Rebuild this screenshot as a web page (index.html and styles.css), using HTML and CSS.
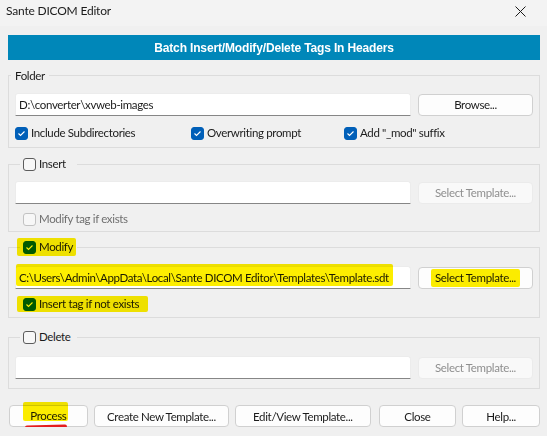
FILE: index.html
```html
<!DOCTYPE html>
<html lang="en">
<head>
    <meta charset="UTF-8">
    <title>Sante DICOM Editor</title>
    <link rel="stylesheet" href="styles.css">
</head>
<body>
    <div class="titlebar">
        <span class="title">Sante DICOM Editor</span>
        <svg class="close-icon" width="11" height="11" viewBox="0 0 11 11">
            <path d="M0.5 0.5 L10.5 10.5 M10.5 0.5 L0.5 10.5" stroke="#1a1a1a" stroke-width="1" fill="none"/>
        </svg>
    </div>

    <div class="dialog">
        <div class="banner">Batch Insert/Modify/Delete Tags In Headers</div>

        <!-- Folder -->
        <div class="group group-folder">
            <div class="group-title">Folder</div>
            <div class="field-row">
                <div class="textbox">D:\converter\xvweb-images</div>
                <button class="btn">Browse...</button>
            </div>
            <div class="check-row check-row-folder">
                <label class="check"><span class="box checked"></span>Include Subdirectories</label>
                <label class="check"><span class="box checked"></span>Overwriting prompt</label>
                <label class="check"><span class="box checked"></span>Add "_mod" suffix</label>
            </div>
        </div>

        <!-- Insert -->
        <div class="group group-insert">
            <label class="group-title check-title"><span class="box"></span>Insert</label>
            <div class="field-row">
                <div class="textbox"></div>
                <button class="btn" disabled>Select Template...</button>
            </div>
            <div class="check-row">
                <label class="check disabled"><span class="box"></span>Modify tag if exists</label>
            </div>
        </div>

        <!-- Modify -->
        <div class="group group-modify">
            <label class="group-title check-title"><span class="hl hl-title"><span class="box checked"></span>Modify</span></label>
            <div class="field-row">
                <div class="textbox"><span class="hl hl-path">C:\Users\Admin\AppData\Local\Sante DICOM Editor\Templates\Template.sdt</span></div>
                <button class="btn"><span class="hl hl-btn">Select Template...</span></button>
            </div>
            <div class="check-row">
                <label class="check hl hl-row"><span class="box checked"></span>Insert tag if not exists</label>
            </div>
        </div>

        <!-- Delete -->
        <div class="group group-delete">
            <label class="group-title check-title"><span class="box"></span>Delete</label>
            <div class="field-row">
                <div class="textbox"></div>
                <button class="btn" disabled>Select Template...</button>
            </div>
        </div>

        <div class="actions">
            <button class="btn btn-process"><span class="hl hl-process">Process</span></button>
            <button class="btn btn-wide">Create New Template...</button>
            <button class="btn btn-wide">Edit/View Template...</button>
            <button class="btn btn-close">Close</button>
            <button class="btn btn-help">Help...</button>
        </div>
    </div>
</body>
</html>
```

FILE: styles.css
```css
body {
    margin: 0;
    background-color: #f0f0f0;
    font-family: Lato, "Noto Sans", sans-serif;
    font-size: 11.5px;
    letter-spacing: -0.35px;
    color: #1b1b1b;
}
.titlebar {
    height: 26px;
    background-color: #f3f3f3;
    display: flex;
    justify-content: space-between;
    align-items: flex-start;
    padding: 3px 21px 0 6px;
    box-sizing: border-box;
}
.title {
    line-height: 16px;
    font-size: 12px;
    letter-spacing: -0.2px;
}
.close-icon {
    margin-top: 3px;
}
.dialog {
    padding: 9px 7px 0 8px;
}
.banner {
    height: 25px;
    background-color: #0087b9;
    color: white;
    font-family: "Liberation Sans", Arial, sans-serif;
    font-weight: bold;
    font-size: 12px;
    letter-spacing: -0.15px;
    display: flex;
    align-items: center;
    justify-content: center;
}
.group {
    position: relative;
    border: 1px solid #dcdcdc;
    padding: 16px 6px 4px;
}
.group-folder {
    margin-top: 15px;
    padding: 17px 6px 6px;
}
.group-insert {
    margin-top: 16px;
}
.group-modify {
    margin-top: 15px;
    padding: 18px 6px 5px;
}
.group-delete {
    margin-top: 19px;
    padding: 18px 6px 9px;
}
.group-title {
    position: absolute;
    top: -8px;
    left: 2px;
    padding: 0 4px;
    line-height: 16px;
    background-color: #f0f0f0;
}
.check-title {
    top: -9px;
    left: 11px;
    width: 57px;
    box-sizing: border-box;
    padding: 0 0 0 3px;
    display: flex;
    align-items: center;
    gap: 3px;
}
.field-row {
    display: flex;
    align-items: center;
    gap: 7px;
}
.textbox {
    flex: 1;
    height: 23px;
    box-sizing: border-box;
    background: white;
    border: 1px solid #ececec;
    border-bottom-color: #868686;
    border-radius: 3px 3px 0 0;
    padding: 0 3px;
    line-height: 21px;
    white-space: nowrap;
}
.btn {
    width: 115px;
    height: 22px;
    background-color: #fdfdfd;
    border: 1px solid #d0d0d0;
    border-radius: 4px;
    font-family: inherit;
    font-size: 11.5px;
    letter-spacing: -0.35px;
    color: #1b1b1b;
    padding: 0;
    overflow: visible;
    white-space: nowrap;
}
.btn:disabled {
    background-color: #f9f9f9;
    border-color: #ebebeb;
    color: #8f8f8f;
}
.check-row {
    display: flex;
    margin-top: 7px;
    padding-left: 8px;
    height: 16px;
}
.check-row-folder {
    display: grid;
    grid-template-columns: 176px 153px auto;
    padding-left: 0;
    margin-top: 9px;
}
.check {
    display: inline-flex;
    align-items: center;
    gap: 3px;
    line-height: 16px;
}
.check.disabled {
    color: #6f6f6f;
}
.box {
    width: 13px;
    height: 13px;
    box-sizing: border-box;
    border: 1px solid #5c5c5c;
    border-radius: 3px;
    background: #f7f7f7;
    display: inline-block;
    flex-shrink: 0;
}
.disabled .box {
    border-color: #c2c2c2;
}
.box.checked {
    border-color: #005fb8;
    background: #005fb8 url("data:image/svg+xml;utf8,<svg xmlns='http://www.w3.org/2000/svg' width='13' height='13'><path d='M3.5 6.5 L5.5 8.5 L9.5 4.5' stroke='white' stroke-width='1.1' fill='none'/></svg>") no-repeat;
    background-position: -1px -1px;
}
.actions {
    display: flex;
    gap: 6px;
    margin-top: 16px;
    padding-left: 1px;
}
.btn-process {
    width: 79px;
}
.btn-wide {
    width: 136px;
}
.btn-close {
    width: 78px;
    margin-left: 2px;
}
.btn-help {
    width: 78px;
}

/* highlighter marks */
.hl {
    position: relative;
    display: inline-flex;
    align-items: center;
    gap: 3px;
    line-height: 16px;
}
.hl::after {
    content: '';
    position: absolute;
    top: -1px;
    bottom: -1px;
    left: -4px;
    right: -4px;
    background-color: #fdee00;
    mix-blend-mode: multiply;
    border-radius: 2px;
}
.hl-title::after {
    left: -6px;
    right: -3px;
}
.hl-path::after {
    top: -6px;
    bottom: 0;
    left: -3px;
    right: -4px;
}
.hl-row::after {
    top: 0;
    bottom: 0;
    left: -6px;
    right: -9px;
}
.hl-process::after {
    top: -6px;
    bottom: 3px;
    left: -7px;
    right: -2px;
}
.hl-process::before {
    content: '';
    position: absolute;
    z-index: 1;
    left: -5px;
    right: -1px;
    bottom: -5px;
    height: 4px;
    border-radius: 2px;
    background-color: #e41e1e;
    transform: rotate(-1.5deg);
}
```
